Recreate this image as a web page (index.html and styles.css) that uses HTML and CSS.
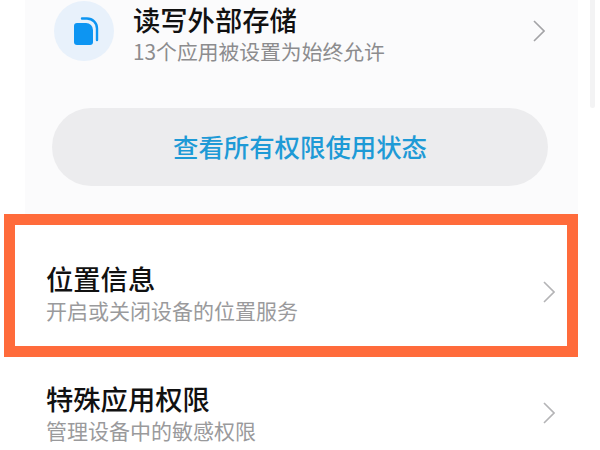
FILE: index.html
```html
<!DOCTYPE html>
<html lang="zh-CN">
<head>
  <meta charset="UTF-8">
  <meta name="viewport" content="width=device-width, initial-scale=1.0">
  <title>权限管理</title>
  <link rel="stylesheet" href="styles.css">
</head>
<body>

  <div class="page">
    <!-- Scrollbar -->
    <div class="scrollbar"></div>

    <!-- Permission card -->
    <section class="perm-card">
      <div class="perm-row">
        <div class="perm-icon">
          <svg width="30" height="32" viewBox="0 0 30 32">
            <path d="M8 8h9a7 7 0 0 1 7 7v12a3 3 0 0 1-3 3H8a3 3 0 0 1-3-3V11a3 3 0 0 1 3-3z" fill="#0d95f2"/>
            <path d="M13 3.5h5a10 10 0 0 1 10 10V25" fill="none" stroke="#0d95f2" stroke-width="2.4" stroke-linecap="round"/>
          </svg>
        </div>
        <div class="item-text">
          <h3 class="item-title">读写外部存储</h3>
          <p class="item-sub item-sub-dark">13个应用被设置为始终允许</p>
        </div>
        <svg class="chevron" width="12" height="22" viewBox="0 0 12 22">
          <path d="M1 1l10 10L1 21" fill="none" stroke="#a3a3a6" stroke-width="1.6"/>
        </svg>
      </div>
      <div class="status-btn">查看所有权限使用状态</div>
    </section>

    <!-- Highlighted item -->
    <div class="item item-marked">
      <div class="item-text">
        <h3 class="item-title">位置信息</h3>
        <p class="item-sub">开启或关闭设备的位置服务</p>
      </div>
      <svg class="chevron" width="12" height="22" viewBox="0 0 12 22">
        <path d="M1 1l10 10L1 21" fill="none" stroke="#b4b4b6" stroke-width="1.6"/>
      </svg>
    </div>

    <div class="item item-plain">
      <div class="item-text">
        <h3 class="item-title">特殊应用权限</h3>
        <p class="item-sub">管理设备中的敏感权限</p>
      </div>
      <svg class="chevron" width="12" height="22" viewBox="0 0 12 22">
        <path d="M1 1l10 10L1 21" fill="none" stroke="#b4b4b6" stroke-width="1.6"/>
      </svg>
    </div>
  </div>

</body>
</html>
```

FILE: styles.css
```css
body { font-family: "Noto Sans CJK SC", "Liberation Sans", sans-serif; margin: 0; padding: 0; background-color: #fff; }
h3, p { margin: 0; }
.page { position: relative; width: 600px; height: 450px; overflow: hidden; }
.scrollbar { position: absolute; top: 0; left: 590px; width: 5px; height: 108px; background-color: #f3f3f4; border-radius: 0 0 3px 3px; }
.perm-card { box-sizing: border-box; width: 553px; height: 214px; margin-left: 25px; padding-top: 1px; background-color: #fbfbfc; }
.perm-row { display: flex; align-items: center; height: 60px; padding-left: 29px; padding-right: 33px; }
.perm-row .item-text { align-self: flex-start; padding-top: 1px; }
.perm-icon { display: flex; align-items: center; justify-content: center; flex-shrink: 0; width: 60px; height: 60px; margin-right: 19px; border-radius: 50%; background-color: #e8f1fb; }
.status-btn { width: 496px; height: 78px; margin-top: 47px; margin-left: 27px; border-radius: 39px; background-color: #ececee; color: #1e9ad6; font-size: 25.4px; font-weight: 500; line-height: 76px; text-align: center; }
.item { display: flex; align-items: center; box-sizing: border-box; width: 574px; margin-left: 4px; }
.item-marked { height: 143px; padding-top: 15px; padding-left: 31px; padding-right: 12px; border: 11px solid #ff6b3b; background-color: #fff; }
.item-marked .chevron { margin-bottom: 2px; }
.item-plain { height: 93px; padding-top: 19px; padding-left: 42px; padding-right: 23px; }
.item-text { flex: 1; }
.item-title { color: #111; font-size: 27.3px; font-weight: 500; line-height: 34px; }
.item-sub { color: #9a9a9c; font-size: 21px; line-height: 30px; }
.item-sub-dark { color: #8c8c8e; font-size: 20.8px; }
.chevron { flex-shrink: 0; }
```
